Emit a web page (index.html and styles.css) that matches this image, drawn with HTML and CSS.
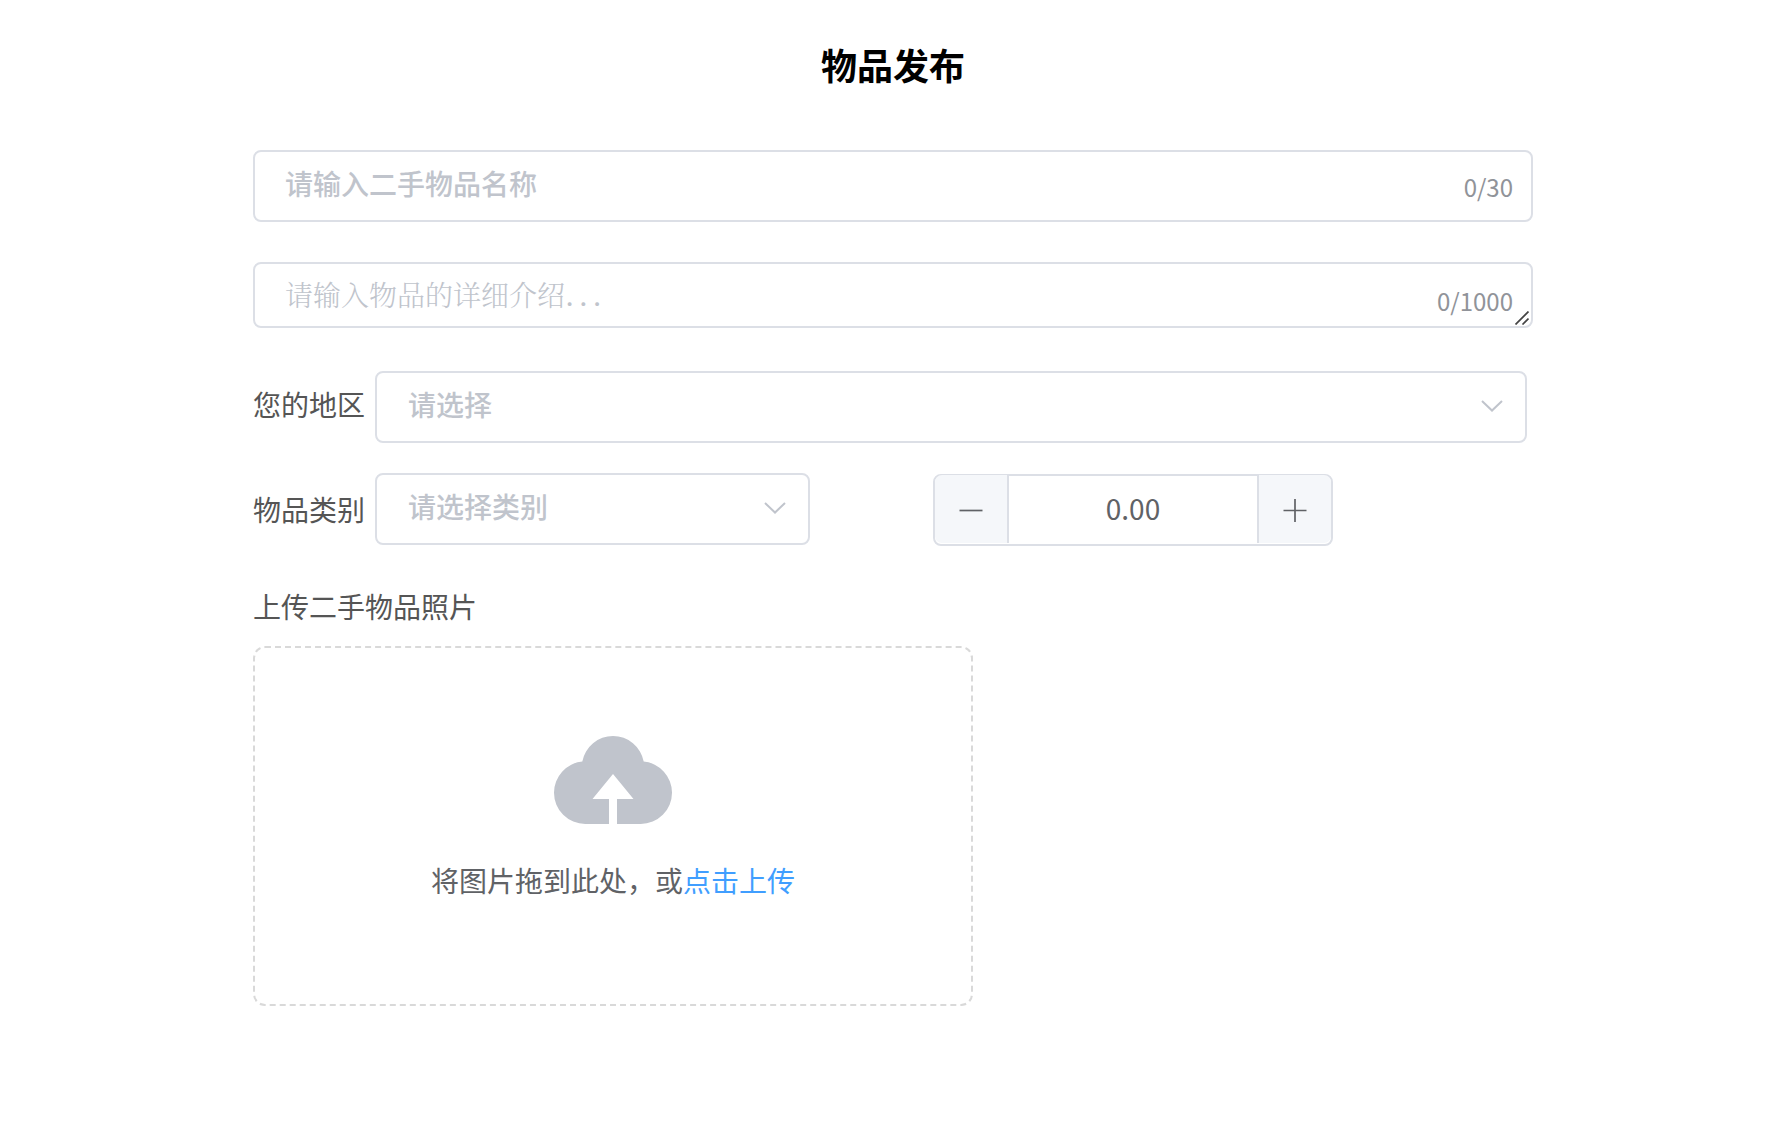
FILE: index.html
```html
<!DOCTYPE html>
<html lang="zh-CN">
<head>
<meta charset="utf-8">
<title>物品发布</title>
<link rel="stylesheet" href="styles.css">
</head>
<body>
<main class="publish">
  <h1 class="title">物品发布</h1>
  <div class="field field-name">
    <span class="placeholder">请输入二手物品名称</span>
    <span class="count">0/30</span>
  </div>
  <div class="field field-detail">
    <span class="placeholder">请输入物品的详细介绍<span class="dots">...</span></span>
    <span class="count">0/1000</span>
    <svg class="grip" width="14" height="14" viewBox="0 0 14 14"><path d="M.5 13.5l13-13M7.500 13.500l6-6"/></svg>
  </div>
  <div class="row row-region">
    <span class="label">您的地区</span>
    <div class="field select">
      <span class="placeholder">请选择</span>
      <svg class="arrow" width="22" height="12" viewBox="0 0 22 12"><path d="M1 1l10 9.500L21 1"/></svg>
    </div>
  </div>
  <div class="row row-category">
    <span class="label">物品类别</span>
    <div class="field select select-category">
      <span class="placeholder">请选择类别</span>
      <svg class="arrow" width="22" height="12" viewBox="0 0 22 12"><path d="M1 1l10 9.500L21 1"/></svg>
    </div>
    <div class="number">
      <span class="step decrease"><svg width="24" height="24" viewBox="0 0 24 24"><path d="M.5 12.500h23"/></svg></span>
      <span class="value">0.00</span>
      <span class="step increase"><svg width="24" height="24" viewBox="0 0 24 24"><path d="M.5 12.500h23M12 1v23"/></svg></span>
    </div>
  </div>
  <p class="upload-label">上传二手物品照片</p>
  <div class="upload">
    <svg class="cloud" width="118" height="88" viewBox="0 0 118 88"><path d="M28.300 25.500A31.300 31.300 0 0 1 59 0A31.300 31.300 0 0 1 89.700 25.500A31.300 31.300 0 0 1 118 56.700A31.300 31.300 0 0 1 86.700 88H63V63H79.500L59 38 38.500 63H55V88H31.300A31.300 31.300 0 0 1 0 56.700A31.300 31.300 0 0 1 28.300 25.500Z"/></svg>
    <p class="upload-text">将图片拖到此处，或<em>点击上传</em></p>
  </div>
</main>
</body>
</html>
```
FILE: styles.css
```css
* { box-sizing: border-box; }
body {
  margin: 0;
  background: #fff;
  color: #555;
  font: 28px/40px "Noto Sans CJK SC", sans-serif;
}
.publish {
  width: 1280px;
  margin-left: 253px;
  display: flex;
  flex-direction: column;
}
.title {
  margin: 38px 0 0;
  height: 112px;
  font-size: 36px;
  line-height: 52px;
  font-weight: 700;
  color: #000;
  text-align: center;
}
.field {
  position: relative;
  display: flex;
  justify-content: space-between;
  height: 72px;
  border: 2px solid #dcdfe6;
  border-radius: 8px;
  padding: 11px 18px 0 30px;
}
.placeholder { color: #c0c4cc; font-weight: 500; }
.count {
  color: #909399;
  font-size: 24px;
  padding-top: 4px;
}
.field-detail {
  margin-top: 40px;
  height: 66px;
  padding-top: 10px;
}
.field-detail .placeholder {
  font-family: "Noto Serif CJK SC", "Noto Serif SC", serif;
  font-weight: 300;
}
.dots { letter-spacing: 4.5px; font-weight: 500; }
.field-detail .count { padding-top: 7px; }
.grip {
  position: absolute;
  right: 2px;
  bottom: 1px;
  fill: none;
  stroke: #444;
  stroke-width: 1.7;
}
.row { display: flex; }
.row-region { margin-top: 43px; }
.row-category { margin-top: 30px; }
.label {
  width: 122px;
  padding-top: 13px;
}
.row-category .label { padding-top: 16px; }
.select { width: 1152px; padding-right: 22px; }
.select .placeholder { padding-left: 1px; }
.select-category { width: 435px; }
.arrow {
  margin-top: 16px;
  fill: none;
  stroke: #c0c4cc;
  stroke-width: 2;
}
.number {
  display: flex;
  width: 400px;
  height: 72px;
  margin: 1px 0 0 123px;
  border: 2px solid #dcdfe6;
  border-radius: 8px;
  color: #606266;
}
.step {
  display: flex;
  align-items: center;
  justify-content: center;
  width: 74px;
  height: 68px;
  margin-top: -1px;
  padding-top: 2px;
  background: #f5f7fa;
}
.step svg { fill: none; stroke: #606266; stroke-width: 1.7; }
.decrease { border-right: 2px solid #dcdfe6; border-radius: 7px 0 0 7px; }
.increase { border-left: 2px solid #dcdfe6; border-radius: 0 7px 7px 0; }
.value { flex: 1; text-align: center; padding-top: 12px; }
.upload-label { margin: 40px 0 0; height: 60px; }
.upload {
  width: 720px;
  height: 360px;
  border: 2px dashed #d9d9d9;
  border-radius: 12px;
  display: flex;
  flex-direction: column;
  align-items: center;
}
.cloud { margin-top: 88px; fill: #c0c4cc; }
.upload-text { margin: 36px 0 0; color: #606266; }
.upload-text em { font-style: normal; color: #409eff; }
```
